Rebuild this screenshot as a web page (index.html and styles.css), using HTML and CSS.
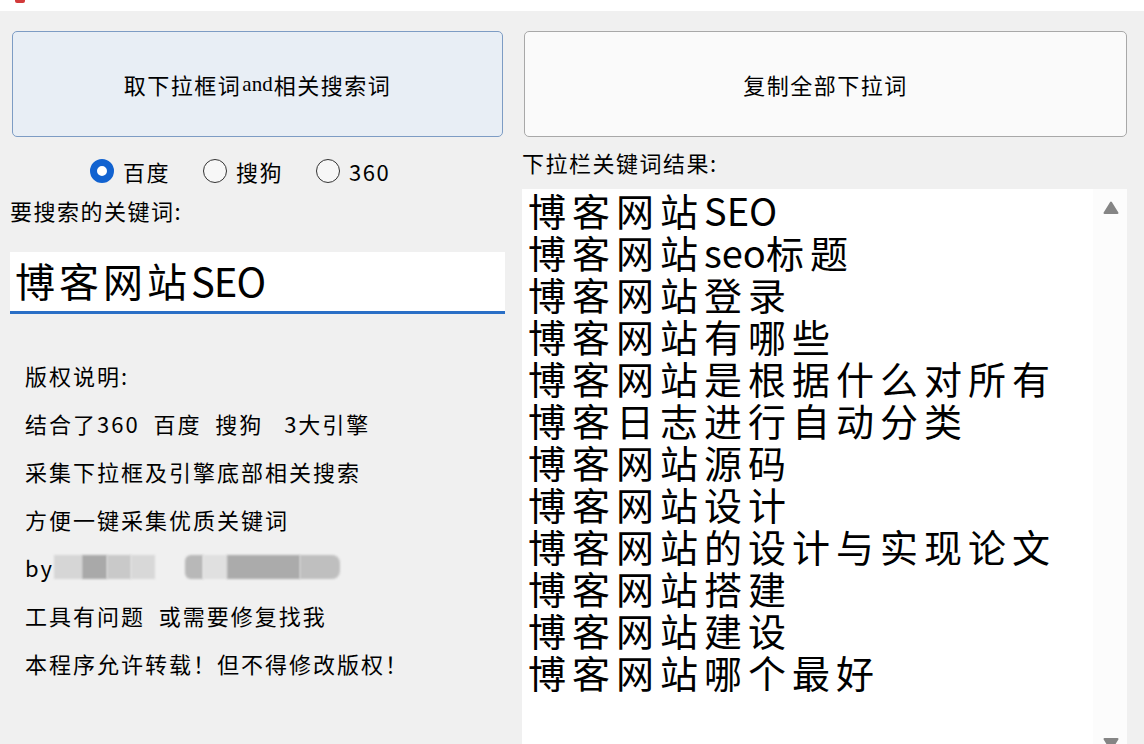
FILE: index.html
```html
<!DOCTYPE html>
<html lang="zh-CN">
<head>
  <meta charset="UTF-8">
  <meta name="viewport" content="width=device-width, initial-scale=1.0">
  <title>下拉词采集</title>
  <link rel="stylesheet" href="styles.css">
</head>
<body>
  <div class="titlebar">
    <span class="app-icon"></span>
  </div>
  <div class="main">
    <div class="left">
      <div class="btn btn-primary">取下拉框词<span class="en">and</span>相关搜索词</div>
      <div class="engines">
        <label class="radio"><span class="dot checked"></span>百度</label>
        <label class="radio"><span class="dot"></span>搜狗</label>
        <label class="radio"><span class="dot"></span>360</label>
      </div>
      <div class="caption">要搜索的关键词:</div>
      <div class="keyword">博客网站<span class="lat">SEO</span></div>
      <div class="notes">
        <p>版权说明:</p>
        <p>结合了360&nbsp; 百度&nbsp; 搜狗&nbsp;&nbsp; 3大引擎</p>
        <p>采集下拉框及引擎底部相关搜索</p>
        <p>方便一键采集优质关键词</p>
        <p class="by">by<span class="blur b1"></span><span class="blur b2"></span><span class="blur b3"></span><span class="blur b4"></span><span class="gap"></span><span class="blur b5"></span><span class="blur b6"></span><span class="blur b7"></span><span class="blur b8"></span></p>
        <p>工具有问题&nbsp; 或需要修复找我</p>
        <p>本程序允许转载！但不得修改版权！</p>
      </div>
    </div>
    <div class="right">
      <div class="btn">复制全部下拉词</div>
      <div class="caption">下拉栏关键词结果:</div>
      <div class="result">
        <div class="lines">
          <div>博客网站<span class="lat">SEO</span></div>
          <div>博客网站<span class="lat">seo</span>标题</div>
          <div>博客网站登录</div>
          <div>博客网站有哪些</div>
          <div>博客网站是根据什么对所有</div>
          <div>博客日志进行自动分类</div>
          <div>博客网站源码</div>
          <div>博客网站设计</div>
          <div>博客网站的设计与实现论文</div>
          <div>博客网站搭建</div>
          <div>博客网站建设</div>
          <div>博客网站哪个最好</div>
        </div>
        <div class="scrollbar">
          <svg class="arrow" width="16" height="14" viewBox="0 0 16 14"><path d="M8 1.5 L14.5 12 L1.5 12 Z" fill="#858585" stroke="#858585" stroke-width="2" stroke-linejoin="round"/></svg>
          <svg class="arrow" width="16" height="14" viewBox="0 0 16 14"><path d="M8 12.5 L14.5 2 L1.5 2 Z" fill="#858585" stroke="#858585" stroke-width="2" stroke-linejoin="round"/></svg>
        </div>
      </div>
    </div>
  </div>
</body>
</html>
```

FILE: styles.css
```css
* {
  margin: 0;
  padding: 0;
  box-sizing: border-box;
}
html, body {
  width: 1144px;
  height: 744px;
  overflow: hidden;
}
body {
  background: #f0f0f0;
  font-family: "Noto Sans CJK SC", "Noto Sans", sans-serif;
  color: #111;
}
.titlebar {
  height: 11px;
  background: #fff;
  padding-left: 15px;
}
.app-icon {
  display: block;
  width: 10px;
  height: 3px;
  background: #d23a3a;
  border-radius: 0 0 2px 2px;
}
.main {
  display: flex;
  gap: 17px;
  padding: 20px 0 0 10px;
}
.left {
  width: 495px;
}
.right {
  width: 605px;
}
.btn {
  height: 106px;
  margin-left: 2px;
  border: 1px solid #a8a8a8;
  border-radius: 5px;
  background: #fafafa;
  display: flex;
  align-items: center;
  justify-content: center;
  font-size: 22px;
  letter-spacing: 1.5px;
  color: #000;
}
.left .btn {
  margin-right: 2px;
}
.btn-primary {
  background: #e8eef5;
  border-color: #7d9cc4;
}
.en {
  font-family: "Liberation Serif", serif;
  font-size: 21px;
  letter-spacing: 0;
  margin: 0 1px;
}
.engines {
  display: flex;
  align-items: center;
  height: 26px;
  margin-top: 21px;
  padding-left: 80px;
  gap: 33px;
  font-size: 22px;
  line-height: 26px;
  letter-spacing: 1.5px;
  color: #000;
}
.radio {
  display: flex;
  align-items: center;
  gap: 9px;
}
.dot {
  width: 24px;
  height: 24px;
  border-radius: 50%;
  border: 1.5px solid #333;
  background: #f7f7f7;
}
.dot.checked {
  border: 7px solid #1162d0;
  background: #fff;
}
.caption {
  font-size: 22px;
  letter-spacing: 1.5px;
  line-height: 30px;
  margin-top: 11px;
  color: #000;
}
.right .caption {
  margin-top: 10px;
}
.keyword {
  margin-top: 27px;
  height: 62px;
  background: #fff;
  border-bottom: 3px solid #2a6fc6;
  padding: 0 0 0 5px;
  font-size: 40px;
  line-height: 56px;
  letter-spacing: 4px;
  color: #000;
}
.lat {
  letter-spacing: -1px;
}
.notes {
  margin-top: 37px;
  padding-left: 15px;
  font-size: 22px;
  line-height: 48px;
  letter-spacing: 2px;
  color: #000;
}
.by {
  display: flex;
  align-items: center;
}
.blur {
  display: inline-block;
  height: 24px;
  filter: blur(0.8px);
}
.b1 { width: 28px; background: #d6d6d6; }
.b2 { width: 25px; background: #a9a9a9; }
.b3 { width: 24px; background: #c9c9c9; }
.b4 { width: 24px; background: #d8d8d8; }
.gap { width: 30px; }
.b5 { width: 18px; background: #b8b8b8; border-radius: 6px 0 0 6px; }
.b6 { width: 24px; background: #e0e0e0; }
.b7 { width: 73px; background: #ababab; }
.b8 { width: 40px; background: #bfbfbf; border-radius: 0 8px 8px 0; }
.result {
  margin-top: 12px;
  height: 572px;
  background: #fff;
  display: flex;
}
.lines {
  flex: 1;
  padding: 0 0 0 6px;
  font-size: 38px;
  line-height: 42px;
  letter-spacing: 6px;
  color: #000;
}
.lines .lat {
  letter-spacing: 0;
}
.scrollbar {
  width: 34px;
  background: #fcfcfc;
  display: flex;
  flex-direction: column;
  align-items: center;
  justify-content: space-between;
  padding: 12px 0 10px 2px;
}
```
